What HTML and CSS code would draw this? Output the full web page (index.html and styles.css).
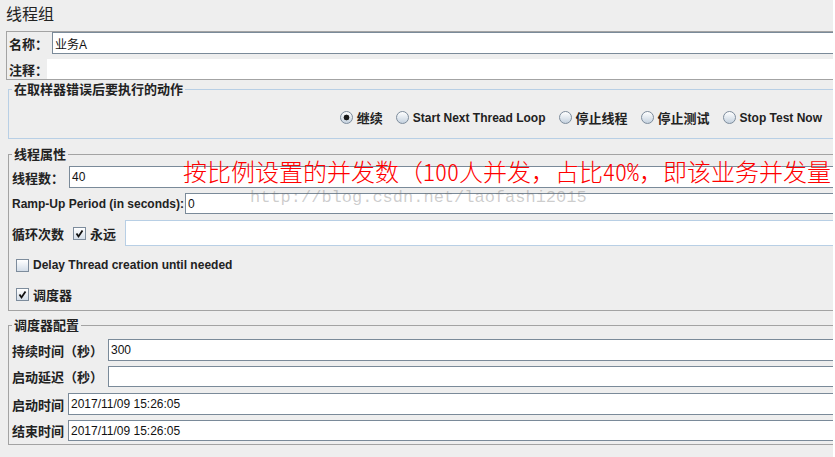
FILE: index.html
```html
<!DOCTYPE html>
<html lang="zh-CN">
<head>
    <meta charset="UTF-8">
    <title>线程组</title>
    <link rel="stylesheet" href="styles.css">
</head>
<body>
    <div class="app">
        <div class="title">线程组</div>

        <div class="name-panel">
            <div class="row name-row">
                <label class="lbl zh lbl-name">名称：</label>
                <div class="field">业务A</div>
            </div>
            <div class="row comment-row">
                <label class="lbl zh lbl-comment">注释：</label>
                <div class="area"></div>
            </div>
        </div>

        <fieldset class="group group-blue">
            <legend>在取样器错误后要执行的动作</legend>
            <div class="radios">
                <span class="opt"><i class="radio on"></i><span class="lbl zh">继续</span></span>
                <span class="opt"><i class="radio"></i><span class="lbl">Start Next Thread Loop</span></span>
                <span class="opt"><i class="radio"></i><span class="lbl zh">停止线程</span></span>
                <span class="opt"><i class="radio"></i><span class="lbl zh">停止测试</span></span>
                <span class="opt"><i class="radio"></i><span class="lbl">Stop Test Now</span></span>
            </div>
        </fieldset>

        <fieldset class="group group-threads">
            <legend>线程属性</legend>
            <div class="row row-threads">
                <label class="lbl zh lbl-threads">线程数：</label>
                <div class="field">40</div>
            </div>
            <div class="row row-ramp">
                <label class="lbl lbl-ramp">Ramp-Up Period (in seconds):</label>
                <div class="field">0</div>
            </div>
            <div class="row row-loop">
                <label class="lbl zh lbl-loop">循环次数</label>
                <i class="check on"></i>
                <span class="lbl zh forever">永远</span>
                <div class="field field-off"></div>
            </div>
            <div class="row row-check">
                <i class="check"></i>
                <span class="lbl">Delay Thread creation until needed</span>
            </div>
            <div class="row row-check row-sched">
                <i class="check on"></i>
                <span class="lbl zh">调度器</span>
            </div>
        </fieldset>

        <fieldset class="group group-sched">
            <legend>调度器配置</legend>
            <div class="row row-a">
                <label class="lbl zh lbl-long">持续时间（秒）</label>
                <div class="field">300</div>
            </div>
            <div class="row row-b">
                <label class="lbl zh lbl-long">启动延迟（秒）</label>
                <div class="field"></div>
            </div>
            <div class="row row-c">
                <label class="lbl zh lbl-short">启动时间</label>
                <div class="field">2017/11/09 15:26:05</div>
            </div>
            <div class="row row-d">
                <label class="lbl zh lbl-short">结束时间</label>
                <div class="field">2017/11/09 15:26:05</div>
            </div>
        </fieldset>

        <!-- 截图上的批注和水印 -->
        <div class="note">按比例设置的并发数（<span class="hw">100</span>人并发，占比<span class="hw">40%</span>，即该业务并发量</div>
        <div class="mark">http://blog.csdn.net/laofashi2015</div>
    </div>
</body>
</html>
```

FILE: styles.css
```css
body {
    margin: 0;
    background-color: #fff;
    font-family: "Liberation Sans", "Noto Sans CJK SC", sans-serif;
    color: #222;
}
.app {
    position: relative;
    width: 833px;
    height: 457px;
    background-color: #eeeeee;
    overflow: hidden;
}
.title {
    height: 31px;
    padding-left: 6px;
    font-family: "Noto Sans CJK SC", sans-serif;
    font-size: 16px;
    line-height: 27px;
    color: #222;
}
.row {
    display: flex;
    align-items: center;
}
.lbl {
    font-size: 12px;
    font-weight: bold;
    white-space: nowrap;
    flex-shrink: 0;
}
.zh {
    font-family: "Noto Sans CJK SC", sans-serif;
    font-size: 13px;
}
.field {
    flex: 1;
    align-self: stretch;
    display: flex;
    align-items: center;
    box-sizing: border-box;
    padding-left: 2px;
    background-color: #fff;
    border: 1px solid #7a8a99;
    font-size: 12px;
    color: #111;
    white-space: nowrap;
}
.field-off {
    border-color: #b8cfe5;
}

/* 名称 / 注释 (the window is cut off on the right) */
.name-panel {
    margin: 0 -12px 0 6px;
    padding-left: 2px;
    border: 1px solid #a3a3a3;
}
.name-row {
    height: 22px;
}
.comment-row {
    height: 20px;
    margin-top: 5px;
}
.lbl-name {
    width: 43px;
}
.lbl-comment {
    width: 38px;
}
.area {
    flex: 1;
    align-self: stretch;
    background-color: #fff;
}

/* titled borders */
.group {
    margin: 0 -12px 0 8px;
    padding: 0 0 0 3px;
    min-width: 0;
    border: 1px solid #a3a3a3;
}
.group legend {
    padding: 0 2px;
    font-family: "Noto Sans CJK SC", sans-serif;
    font-size: 13px;
    font-weight: bold;
    line-height: 16px;
    color: #222;
}
.group-blue {
    margin-top: 1px;
    border-color: #b8cfe5;
}
.group-threads {
    margin-top: 7px;
    padding-bottom: 4px;
}
.group-sched {
    margin-top: 6px;
    padding-bottom: 3px;
}

/* radio buttons */
.radios {
    height: 41px;
    display: flex;
    justify-content: flex-end;
    align-items: center;
    gap: 13px;
    padding-right: 22px;
}
.opt {
    display: flex;
    align-items: center;
    gap: 4px;
}
.radio {
    width: 11px;
    height: 11px;
    border: 1px solid #7d8c9c;
    border-radius: 50%;
    background: linear-gradient(#ffffff, #c5d2df);
}
.radio.on {
    background: radial-gradient(circle, #1a1a1a 2.6px, transparent 3.2px), linear-gradient(#ffffff, #c5d2df);
}

/* check boxes */
.check {
    width: 11px;
    height: 11px;
    border: 1px solid #7d8c9c;
    background: linear-gradient(#ffffff, #d3dde8);
    flex-shrink: 0;
}
.check.on {
    background: url("data:image/svg+xml,%3Csvg xmlns='http://www.w3.org/2000/svg' width='11' height='11'%3E%3Cpath d='M2.5 5.5 L4.5 8.5 L8.5 2.5' fill='none' stroke='%23111' stroke-width='1.8'/%3E%3C/svg%3E") no-repeat, linear-gradient(#ffffff, #d3dde8);
}

/* 线程属性 rows */
.row-threads {
    margin-top: 4px;
    height: 22px;
}
.lbl-threads {
    width: 57px;
}
.row-ramp {
    margin-top: 5px;
    height: 21px;
}
.lbl-ramp {
    width: 173px;
}
.row-loop {
    margin-top: 6px;
    height: 26px;
}
.lbl-loop {
    width: 61px;
}
.forever {
    margin-left: 4px;
    width: 35px;
}
.row-check {
    margin: 7px 0 0 4px;
    height: 24px;
    gap: 4px;
}
.row-sched {
    margin-top: 5px;
}

/* 调度器配置 rows */
.row-a {
    margin-top: 6px;
    height: 22px;
}
.row-b {
    margin-top: 5px;
    height: 21px;
}
.row-c {
    margin-top: 6px;
    height: 22px;
}
.row-d {
    margin-top: 5px;
    height: 21px;
}
.lbl-long {
    width: 96px;
}
.lbl-short {
    width: 56px;
}

/* annotation + watermark over the form */
.note {
    position: absolute;
    left: 183px;
    top: 159px;
    font-family: "Noto Sans CJK SC", sans-serif;
    font-size: 24px;
    font-weight: 300;
    line-height: 24px;
    color: #ff0000;
    white-space: nowrap;
}
.hw {
    font-feature-settings: "hwid";
}
.mark {
    position: absolute;
    left: 250px;
    top: 189px;
    font-family: "Liberation Mono", monospace;
    font-size: 17px;
    line-height: 17px;
    color: rgba(110, 110, 110, 0.35);
    white-space: nowrap;
}
```
